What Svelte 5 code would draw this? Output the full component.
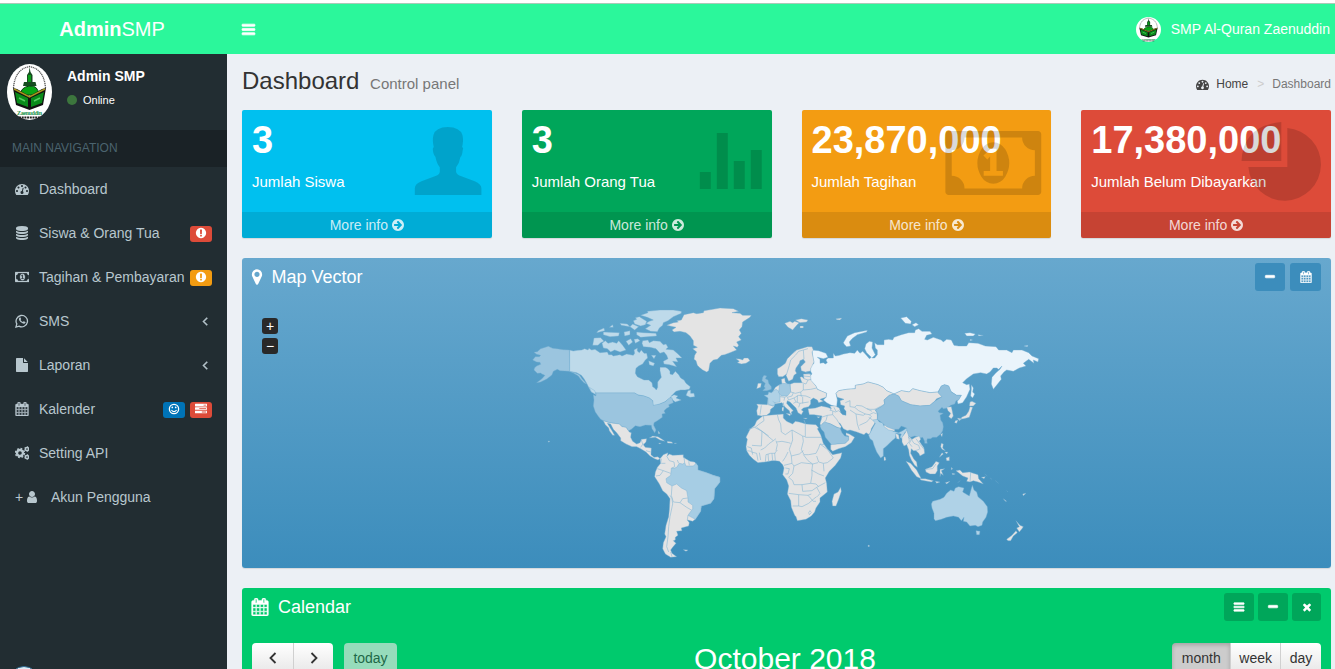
<script>
  const icons = {
    bars: 'M1664 1344v128q0 26-19 45t-45 19h-1408q-26 0-45-19t-19-45v-128q0-26 19-45t45-19h1408q26 0 45 19t19 45zm0-512v128q0 26-19 45t-45 19h-1408q-26 0-45-19t-19-45v-128q0-26 19-45t45-19h1408q26 0 45 19t19 45zm0-512v128q0 26-19 45t-45 19h-1408q-26 0-45-19t-19-45v-128q0-26 19-45t45-19h1408q26 0 45 19t19 45z',
    dash: 'M384 1152q0-53-37.5-90.5t-90.5-37.5-90.5 37.5-37.5 90.5 37.5 90.5 90.5 37.5 90.5-37.5 37.5-90.5zm192-448q0-53-37.5-90.5t-90.5-37.5-90.5 37.5-37.5 90.5 37.5 90.5 90.5 37.5 90.5-37.5 37.5-90.5zm428 481l101-382q6-26-7.5-48.5t-38.5-29.5-48 6.5-30 39.5l-101 382q-60 5-107 43.5t-63 98.5q-20 77 20 146t117 89 146-20 89-117q16-60-6-117t-72-91zm660-33q0-53-37.5-90.5t-90.5-37.5-90.5 37.5-37.5 90.5 37.5 90.5 90.5 37.5 90.5-37.5 37.5-90.5zm-640-640q0-53-37.5-90.5t-90.5-37.5-90.5 37.5-37.5 90.5 37.5 90.5 90.5 37.5 90.5-37.5 37.5-90.5zm448 192q0-53-37.5-90.5t-90.5-37.5-90.5 37.5-37.5 90.5 37.5 90.5 90.5 37.5 90.5-37.5 37.5-90.5zm320 448q0 261-141 483-19 29-54 29h-1402q-35 0-54-29-141-221-141-483 0-182 71-348t191-286 286-191 348-71 348 71 286 191 191 286 71 348z',
    database: 'M896 768q237 0 443-43t325-127v170q0 69-103 128t-280 93.5-385 34.5-385-34.5-280-93.5-103-128v-170q119 84 325 127t443 43zm0 768q237 0 443-43t325-127v170q0 69-103 128t-280 93.5-385 34.5-385-34.5-280-93.5-103-128v-170q119 84 325 127t443 43zm0-384q237 0 443-43t325-127v170q0 69-103 128t-280 93.5-385 34.5-385-34.5-280-93.5-103-128v-170q119 84 325 127t443 43zm0-1152q208 0 385 34.5t280 93.5 103 128v128q0 69-103 128t-280 93.5-385 34.5-385-34.5-280-93.5-103-128v-128q0-69 103-128t280-93.5 385-34.5z',
    money: 'M768 1152h384v-96h-128v-448h-114l-148 137 77 80q42-37 55-57h2v288h-128v96zm512-256q0 70-21 142t-59.5 134-101.5 101-138 39-138-39-101.5-101-59.5-134-21-142 21-142 59.5-134 101.5-101 138-39 138 39 101.5 101 59.5 134 21 142zm512 256v-512q-106 0-181-75t-75-181h-1152q0 106-75 181t-181 75v512q106 0 181 75t75 181h1152q0-106 75-181t181-75zm128-832v1152q0 26-19 45t-45 19h-1792q-26 0-45-19t-19-45v-1152q0-26 19-45t45-19h1792q26 0 45 19t19 45z',
    file: 'M1152 512v-472q22 14 36 28l408 408q14 14 28 36h-472zm-128 32q0 40 28 68t68 28h544v1056q0 40-28 68t-68 28h-1344q-40 0-68-28t-28-68v-1600q0-40 28-68t68-28h800v544z',
    calendar: 'M192 1664h288v-288h-288v288zm352 0h320v-288h-320v288zm-352-352h288v-320h-288v320zm352 0h320v-320h-320v320zm-352-384h288v-288h-288v288zm736 736h320v-288h-320v288zm-384-736h320v-288h-320v288zm768 736h288v-288h-288v288zm-384-352h320v-320h-320v320zm-352-864v-288q0-13-9.5-22.5t-22.5-9.5h-64q-13 0-22.5 9.5t-9.5 22.5v288q0 13 9.5 22.5t22.5 9.5h64q13 0 22.5-9.5t9.5-22.5zm736 864h288v-320h-288v320zm-384-384h320v-288h-320v288zm384 0h288v-288h-288v288zm32-480v-288q0-13-9.5-22.5t-22.5-9.5h-64q-13 0-22.5 9.5t-9.5 22.5v288q0 13 9.5 22.5t22.5 9.5h64q13 0 22.5-9.5t9.5-22.5zm384-64v1280q0 52-38 90t-90 38h-1408q-52 0-90-38t-38-90v-1280q0-52 38-90t90-38h128v-96q0-66 47-113t113-47h64q66 0 113 47t47 113v96h384v-96q0-66 47-113t113-47h64q66 0 113 47t47 113v96h128q52 0 90 38t38 90z',
    alert: 'M896 128q209 0 385.5 103t279.5 279.5 103 385.5-103 385.5-279.5 279.5-385.5 103-385.5-103-279.5-279.5-103-385.5 103-385.5 279.5-279.5 385.5-103zm128 1247v-190q0-14-9-23.5t-22-9.5h-192q-13 0-23 10t-10 23v190q0 13 10 23t23 10h192q13 0 22-9.5t9-23.5zm-2-344l18-621q0-12-10-18-10-8-24-8h-220q-14 0-24 8-10 6-10 18l17 621q0 10 10 17.5t24 7.5h185q14 0 23.5-7.5t10.5-17.5z',
    left: 'M1203 544q0 13-10 23l-393 393 393 393q10 10 10 23t-10 23l-50 50q-10 10-23 10t-23-10l-466-466q-10-10-10-23t10-23l466-466q10-10 23-10t23 10l50 50q10 10 10 23z',
    user: 'M1536 1399q0 109-62.5 187t-150.5 78h-854q-88 0-150.5-78t-62.5-187q0-85 8.5-160.5t31.5-152 58.5-131 94-89 134.5-34.5q131 128 313 128t313-128q76 0 134.5 34.5t94 89 58.5 131 31.5 152 8.5 160.5zm-256-887q0 159-112.5 271.5t-271.5 112.5-271.5-112.5-112.5-271.5 112.5-271.5 271.5-112.5 271.5 112.5 112.5 271.5z',
    arrow: 'M1413 896q0-27-18-45l-91-91-362-362q-18-18-45-18t-45 18l-91 91q-18 18-18 45t18 45l189 189h-502q-26 0-45 19t-19 45v128q0 26 19 45t45 19h502l-189 189q-18 18-18 45t18 45l91 91q18 18 45 18t45-18l362-362 91-91q18-18 18-45zm251 0q0 209-103 385.5t-279.5 279.5-385.5 103-385.5-103-279.5-279.5-103-385.5 103-385.5 279.5-279.5 385.5-103 385.5 103 279.5 279.5 103 385.5z',
    marker: 'M1152 640q0-106-75-181t-181-75-181 75-75 181 75 181 181 75 181-75 75-181zm256 0q0 109-33 179l-364 774q-16 33-47.5 52t-67.5 19-67.5-19-46.5-52l-365-774q-33-70-33-179 0-212 150-362t362-150 362 150 150 362z',
    minus: 'M1600 736v192q0 40-28 68t-68 28h-1216q-40 0-68-28t-28-68v-192q0-40 28-68t68-28h1216q40 0 68 28t28 68z',
    times: 'M1490 1322q0 40-28 68l-136 136q-28 28-68 28t-68-28l-294-294-294 294q-28 28-68 28t-68-28l-136-136q-28-28-28-68t28-68l294-294-294-294q-28-28-28-68t28-68l136-136q28-28 68-28t68 28l294 294 294-294q28-28 68-28t68 28l136 136q28 28 28 68t-28 68l-294 294 294 294q28 28 28 68z',
    tasks: 'M1024 1408h640v-128h-640v128zm-384-512h1024v-128h-1024v128zm640-512h384v-128h-384v128zm512 832v256q0 26-19 45t-45 19h-1664q-26 0-45-19t-19-45v-256q0-26 19-45t45-19h1664q26 0 45 19t19 45zm0-512v256q0 26-19 45t-45 19h-1664q-26 0-45-19t-19-45v-256q0-26 19-45t45-19h1664q26 0 45 19t19 45zm0-512v256q0 26-19 45t-45 19h-1664q-26 0-45-19t-19-45v-256q0-26 19-45t45-19h1664q26 0 45 19t19 45z'
  };

  // Extra outline weight for glyphs whose strokes are thin at small sizes.
  const weight = { bars: 90, calendar: 45, minus: 90, left: 70, money: 30 };

  const menu = [
    { icon: 'dash', label: 'Dashboard' },
    { icon: 'database', label: 'Siswa & Orang Tua', badges: [['alert', '#dd4b39']] },
    { icon: 'money', label: 'Tagihan & Pembayaran', badges: [['alert', '#f39c12']] },
    { icon: 'whatsapp', label: 'SMS', arrow: true },
    { icon: 'file', label: 'Laporan', arrow: true },
    { icon: 'calendar', label: 'Kalender', badges: [['smile', '#0073b7'], ['tasks', '#dd4b39']] },
    { icon: 'cogs', label: 'Setting API' },
    { icon: 'user', label: 'Akun Pengguna', plus: true }
  ];

  const cards = [
    { value: '3', label: 'Jumlah Siswa', tone: 'aqua' },
    { value: '3', label: 'Jumlah Orang Tua', tone: 'green' },
    { value: '23,870,000', label: 'Jumlah Tagihan', tone: 'yellow' },
    { value: '17,380,000', label: 'Jumlah Belum Dibayarkan', tone: 'red' }
  ];

  // Land outlines, grouped by map sheet; each sheet is drawn at three units per pixel.
  const plain = '#e4e4e4';
  const sheets = [
    { x: 520, y: 300, land: [
      ['#9bc5df', 'M148,150 L130,149 110,146 98,145 85,139 72,143 62,146 52,155 42,157 50,163 62,166 58,170 46,170 38,180 50,186 60,187 62,193 50,198 44,203 42,210 52,220 62,219 66,222 75,226 66,236 50,248 62,246 80,237 92,228 96,224 100,214 112,208 120,212 135,213 148,214 160,219 175,228 182,238 192,248 200,252 186,236 178,224 164,218 149,213Z'],
      ['#bedaea', 'M149,150 L160,153 172,151 185,150 194,146 204,150 207,145 215,150 225,148 240,158 262,156 266,164 275,164 280,168 300,164 306,168 320,162 340,166 344,160 342,150 352,144 352,153 358,158 364,150 372,160 380,160 383,174 376,180 368,192 356,198 348,205 346,220 352,230 372,240 386,240 396,248 398,260 404,264 409,270 413,262 413,246 424,232 420,212 420,202 436,202 444,206 450,214 450,222 458,224 466,214 476,224 482,234 492,240 498,250 511,260 508,268 495,270 482,270 468,274 462,280 452,290 462,284 474,288 468,294 484,300 466,306 458,300 452,292 445,298 434,306 420,312 404,318 398,314 398,302 388,294 372,288 352,284 344,279 230,279 214,276 206,262 200,250 192,236 184,226 170,218 149,214Z'],
      ['#9bc5df', 'M228,279 L344,279 356,286 372,288 388,294 398,302 400,316 420,312 436,305 448,294 456,293 460,308 446,314 448,320 438,326 432,333 436,340 426,342 427,352 412,362 402,368 401,376 408,390 404,398 396,386 394,376 376,375 360,380 346,377 334,388 326,392 318,382 306,380 298,372 268,368 250,362 242,358 236,350 226,336 220,318 222,300 220,284 228,288Z'],
      [plain, 'M440,76 L460,68 475,66 470,62 484,60 492,44 520,38 530,41 550,38 552,32 578,28 600,24 640,26 656,34 636,38 660,40 668,46 694,46 690,52 668,66 666,80 658,90 664,100 656,110 664,120 650,126 656,136 652,142 640,138 650,150 630,158 614,164 604,166 592,178 580,180 570,190 566,212 560,216 548,210 538,202 532,196 528,182 522,178 524,166 530,156 518,146 532,142 520,136 520,122 510,108 498,98 480,94 462,96 456,90 468,82 460,80Z'],
      [plain, 'M648,176 L660,177 668,180 672,174 684,174 690,182 678,190 664,192 652,188 658,184Z'],
      ['#bedaea', 'M362,46 L384,38 382,34 420,30 460,30 484,34 484,40 460,50 444,62 430,68 428,76 418,84 412,95 392,94 376,86 392,76 378,70 388,64 400,60 382,52Z M340,62 L350,58 346,53 358,50 380,64 376,74 362,78 344,72Z M366,130 L368,122 384,120 388,128 400,122 420,124 430,134 438,132 444,142 438,148 460,150 474,162 486,174 468,174 474,186 458,184 470,200 448,194 432,192 430,184 444,176 440,166 432,156 420,160 408,146 390,142 370,140Z M246,130 L256,122 264,130 278,126 290,130 296,122 308,136 318,150 300,156 284,150 272,156 262,146 250,144Z M222,114 L242,113 252,124 242,128 234,136 218,136Z M318,124 L332,116 338,126 326,136Z M342,118 L354,116 360,122 346,130Z M350,96 L370,98 408,100 410,108 362,112 350,104Z M250,96 L298,98 296,108 270,110 250,104Z M312,96 L330,92 330,104 314,108Z M230,98 L234,92 252,84 254,92Z M268,82 L278,74 280,82Z M300,70 L322,72 330,80 304,76Z M338,72 L356,80 344,90 330,80Z M388,194 L386,182 404,190 400,198Z M498,286 L504,272 512,270 512,280 522,280 524,290 510,292Z M394,166 L408,166 402,176Z M208,262 L224,272 228,284 214,276Z']
    ] },
    { x: 740, y: 300, land: [
      ['#eaf4fb', 'M216,150 L236,152 258,160 264,172 250,176 232,172 240,178 240,190 250,188 256,192 262,188 258,180 264,174 280,174 280,160 286,168 298,166 310,162 330,158 344,160 352,150 360,160 368,154 376,162 388,176 394,172 380,158 374,146 378,132 388,124 398,126 396,144 406,164 396,174 404,174 412,164 412,150 406,144 404,128 412,134 432,134 432,120 446,118 458,120 462,112 484,104 506,98 524,98 526,90 536,86 546,94 570,94 576,102 560,106 554,118 562,120 580,112 604,120 610,126 620,118 634,120 642,136 656,138 680,138 686,128 714,130 736,138 768,140 776,150 800,150 816,158 820,150 846,150 866,158 876,168 896,176 894,186 880,180 882,190 866,178 850,190 858,198 838,204 820,214 800,210 792,216 782,228 784,238 768,258 760,268 754,252 756,232 768,218 780,208 786,198 776,208 770,204 760,204 750,216 740,222 722,218 700,222 680,236 668,248 680,254 688,252 690,268 680,290 668,308 654,312 652,304 664,286 650,286 632,274 626,258 614,254 604,258 594,276 570,278 540,272 518,266 508,276 484,272 462,282 440,272 430,262 414,254 384,246 370,252 346,256 346,266 320,268 296,272 288,280 292,300 290,320 274,316 260,308 250,300 258,292 260,280 232,268 226,256 212,244 206,232 216,222 210,210 212,198 222,190 218,170Z M314,134 L310,128 322,108 344,98 382,91 380,96 352,104 336,116 328,126 332,138 320,140Z M482,54 L500,50 514,64 512,72 496,70Z M516,74 L528,68 536,74 524,80Z M674,100 L690,98 706,102 700,108 680,108Z M714,104 L730,106 716,108Z M694,254 L700,264 698,276 704,282 698,294 692,288 694,268Z M690,118 L698,120 690,122Z M852,138 L864,136 862,140Z'],
      [plain, 'M134,70 L150,64 158,68 164,64 178,68 170,76 158,90 152,86 144,82Z M166,60 L184,56 204,60 200,66 180,68Z M180,78 L190,78 190,84 180,84Z M288,56 L306,54 300,60 290,59Z M54,250 L64,250 62,262 50,266 52,258Z'],
      [plain, 'M112,222 L112,206 122,200 136,190 142,176 154,164 170,150 190,144 202,140 216,140 220,150 216,156 222,186 212,206 212,213 196,216 184,212 182,200 196,186 190,178 180,182 178,190 168,204 166,212 170,220 162,226 158,238 146,244 138,226 140,222 128,230 116,230Z'],
      [plain, 'M106,262 L118,254 126,252 124,238 134,234 136,246 144,254 152,252 162,248 186,248 182,238 180,232 186,230 192,236 190,222 212,222 212,240 228,258 232,268 260,280 258,292 240,298 250,304 236,308 232,300 220,294 212,300 212,312 206,320 190,324 184,330 190,334 184,344 174,338 168,324 150,306 142,302 140,310 150,322 160,332 154,336 156,344 150,340 148,332 134,320 126,308 116,310 104,312 102,320 92,328 90,338 80,346 66,348 52,346 50,332 54,320 50,312 82,314 84,294 96,280Z M206,336 L204,326 226,324 244,318 262,322 274,326 270,318 286,318 298,324 302,338 308,344 318,346 318,334 312,326 314,318 302,314 300,302 312,298 292,292 288,280 296,272 320,268 346,266 346,256 370,252 384,246 414,254 430,262 440,272 462,282 448,286 432,300 434,312 424,320 406,330 412,340 412,358 404,370 394,386 392,396 388,404 378,398 372,404 350,396 330,390 322,392 310,386 300,370 296,368 304,380 300,386 288,380 272,372 258,368 246,374 242,378 240,370 244,358 246,348 232,346 222,344 208,344Z'],
      ['#9bc5df', 'M240,378 L254,366 272,372 290,382 300,384 306,398 314,408 326,410 326,420 316,430 292,432 276,436 266,424 256,412 252,396 244,388Z'],
      [plain, 'M272,434 L292,432 316,430 326,420 326,408 318,406 318,398 328,402 344,412 334,428 316,440 296,446 278,454 272,448Z'],
      ['#b2d3e7', 'M398,360 L412,358 418,366 428,368 432,378 452,388 460,394 476,398 488,392 500,384 502,392 494,398 486,416 480,412 484,402 468,400 466,414 456,422 440,438 430,446 430,468 422,474 410,456 402,436 398,422 390,416 386,406 392,396 398,384 406,370Z'],
      [plain, 'M434,372 L464,386 464,394 446,390 432,380Z M466,400 L476,404 478,418 470,416Z M462,282 L484,272 508,276 518,266 540,272 570,278 594,276 606,290 590,296 584,304 570,316 540,318 512,314 484,302 476,288Z'],
      ['#93c0dc', 'M462,282 L476,288 484,302 512,314 540,318 570,316 584,304 606,290 594,278 604,258 614,254 626,258 634,276 650,286 664,286 656,300 648,302 644,312 632,316 622,324 610,326 606,322 594,334 598,338 610,340 600,346 602,360 608,368 610,380 608,392 602,402 590,412 578,412 572,416 562,416 560,424 554,424 548,412 540,414 532,410 524,408 512,412 502,404 500,384 484,378 476,388 460,388 440,380 428,370 412,358 414,342 406,330 424,320 434,312 432,300 448,286Z'],
      ['#93c0dc', 'M68,232 L72,226 80,228 76,236 84,240 86,250 94,260 94,268 80,272 68,272 76,264 72,260 76,250 66,242Z M554,424 L560,422 562,430 554,430Z'],
      ['#afd2e6', 'M72,286 L84,284 86,276 94,278 108,268 120,276 120,306 104,308 104,314 98,318 84,312 84,294Z'],
      ['#a1c9e1', 'M118,256 L128,250 150,252 152,276 142,288 124,288 116,278Z'],
      [plain, 'M620,322 L634,320 640,348 634,356 626,350 632,340 624,332Z M690,306 L696,304 708,310 700,318 688,318Z M690,320 L698,322 688,352 672,356 658,358 668,350 678,346 686,334Z M646,362 L654,360 650,370 644,368Z M652,354 L666,356 658,362Z M130,308 L132,320 128,316Z M126,322 L132,322 130,334 126,332Z M138,340 L152,342 150,348Z M190,354 L202,354 198,357Z M230,350 L240,350 236,354Z M602,404 L608,398 606,410Z']
    ], lines: 'M150,252 L152,276 166,280 182,276 190,270 190,252 M190,270 212,268 230,264 M160,278 156,288 142,292 146,300 162,294 176,286 198,288 212,294 M162,294 168,306 180,310 206,306 M180,310 176,322 M168,306 160,310 M182,276 184,290 M172,286 172,306 M188,290 188,310 M120,290 134,292 142,288 M134,292 132,302 M64,316 60,344 M84,314 102,318 M140,222 148,196 152,180 166,166 176,154 190,150 M190,150 192,178 M190,150 204,146 M212,222 196,218 M192,236 204,240 214,238 M190,228 210,230 M186,248 198,252 204,240 M150,168 166,152 M316,308 L330,302 330,320 344,322 350,316 366,318 380,326 390,328 404,328 432,314 M344,322 356,332 376,342 370,346 348,342 330,330 M348,342 352,372 358,390 M376,342 388,344 400,338 412,342 M388,344 394,350 380,366 358,376 M302,338 296,332 286,336 270,330 M278,334 278,344 290,358 296,368 M278,344 262,346 244,352 M262,346 258,362 246,372 M386,352 398,360 M380,326 396,334 M282,322 288,334 M404,328 412,336 M274,326 270,332 M98,304 108,310' },
    { x: 520, y: 420, land: [
      [plain, 'M250,2 L268,8 298,12 306,20 318,22 328,36 334,38 332,52 338,64 350,72 360,68 364,58 380,56 378,66 370,74 376,82 394,84 393,104 402,112 414,110 420,116 414,120 404,116 390,108 378,96 362,86 350,80 336,80 318,72 302,62 302,54 290,38 280,28 272,12 262,10 276,32 284,46 278,46 268,32 266,24 256,14Z'],
      [plain, 'M388,54 L398,48 414,50 430,60 434,64 420,60 406,52Z M442,64 L456,66 458,70 442,69Z M416,69 L424,70 418,72Z M464,69 L470,70 464,71Z M490,389 L504,390 498,394Z M84,63 L90,64 86,67Z M414,32 L420,40 416,42Z'],
      [plain, 'M420,116 L430,104 444,98 442,108 448,102 458,106 490,104 490,112 500,118 510,124 524,126 534,138 534,150 560,158 580,166 600,172 600,186 584,206 582,236 572,250 544,258 542,274 526,298 518,304 502,300 508,308 506,318 484,324 486,332 470,334 474,346 466,352 466,360 460,362 468,370 458,382 452,390 456,400 470,410 452,412 436,402 428,386 430,368 438,350 434,342 438,316 446,290 448,270 450,236 440,222 428,212 418,192 404,170 406,156 412,142 422,130Z'],
      ['#a6cde4', 'M438,176 L452,166 454,144 464,144 470,142 478,130 488,132 494,128 498,138 520,138 528,130 534,138 534,150 560,158 580,166 600,172 600,186 584,206 582,236 572,250 544,258 542,274 526,298 504,286 518,266 518,256 504,246 504,234 500,212 484,204 470,192 456,198 440,188Z']
    ], lines: 'M422,130 L424,116 M412,146 430,152 452,160 M430,152 420,166 408,168 M456,144 464,140 462,126 448,122 440,108 M492,112 494,128 M506,124 508,136 M456,198 454,226 460,246 M450,226 456,236 458,252 450,290 446,320 444,350 440,380 446,396 M460,246 480,248 488,236 504,234 M480,248 500,262 514,270 M504,286 502,300 M362,82 370,70 M378,92 392,96 M368,72 364,60 M452,396 456,410 M424,130 436,130 M472,120 476,130' },
    { x: 740, y: 400, land: [
      [plain, 'M68,48 L84,46 104,44 130,42 130,54 140,64 158,72 166,64 178,66 198,72 228,74 236,84 232,86 242,104 250,130 262,146 278,164 306,158 302,174 286,196 268,214 256,234 260,250 262,276 240,294 240,306 228,324 224,336 214,348 198,358 172,362 168,350 164,346 154,322 152,302 142,282 146,258 140,240 128,224 132,204 128,194 118,184 106,182 96,182 76,186 54,188 40,178 28,166 20,152 18,140 22,118 18,112 30,88 44,76 50,62Z M302,262 L304,274 296,298 288,318 278,318 276,304 282,282 294,276Z'],
      [plain, 'M486,112 L496,98 500,90 506,108 516,118 526,112 538,108 542,118 538,124 552,144 554,160 540,168 536,160 528,152 520,152 514,146 512,160 522,178 530,186 532,202 524,196 514,180 508,166 506,150 500,134 492,138 486,126Z'],
      [plain, 'M498,184 L512,190 530,210 544,236 530,230 514,210 506,196Z M540,236 L556,236 580,242 574,246 542,240Z M556,208 L576,200 588,184 598,188 592,198 592,212 586,222 570,222 558,216Z M600,208 L614,206 604,212 610,226 602,220 600,230Z M648,212 L660,210 668,218 688,216 714,224 716,236 730,252 714,246 700,242 690,246 680,244 684,234 668,228Z M604,130 L610,132 608,144 616,152 606,148 602,140Z M614,156 L624,156 620,162Z M618,174 L628,170 628,182 620,182Z M606,158 L610,162 598,172Z M432,170 L436,172 438,180 432,182Z M586,244 L600,246 590,250Z M616,248 L630,244 620,252Z M634,202 L638,206 634,210Z M724,232 L736,230 732,236Z M734,222 L742,228 M750,234 L756,238 M766,242 L776,250 M790,296 L800,304 796,304Z M848,282 L858,280 850,287Z M800,272 L804,276 M384,435 L390,438 384,440Z M636,220 L646,222 638,224Z M660,242 L654,248Z'],
      ['#afd2e7', 'M574,312 L578,304 600,298 612,292 620,280 632,270 642,274 646,264 656,260 672,264 668,276 688,288 694,266 697,256 702,270 710,276 714,290 730,304 742,320 743,336 738,352 728,366 726,376 714,380 706,376 690,378 680,366 670,364 672,352 664,362 656,352 640,348 620,352 604,358 586,362 582,356 582,340 576,324Z M708,392 L720,394 718,404 710,404Z'],
      [plain, 'M828,362 L840,376 850,380 846,386 838,396 830,384 838,380Z M800,418 L816,406 828,392 832,398 820,408 812,422 804,422Z']
    ], lines: 'M70,46 L72,62 58,72 48,80 26,88 M44,82 66,94 64,138 36,136 M66,94 100,122 108,116 M100,122 86,132 74,144 62,150 M50,82 86,108 M112,44 116,60 122,72 124,96 136,104 156,90 188,108 196,110 M196,70 196,110 M196,112 246,112 M156,90 158,120 148,148 M108,152 112,134 108,122 M110,126 126,124 146,128 152,130 M188,108 190,124 184,148 192,164 206,164 228,160 M148,148 154,168 178,162 190,152 M106,182 104,160 112,150 M144,156 136,172 128,184 M154,168 156,190 132,196 M76,186 78,164 92,160 106,160 M58,158 62,180 M34,156 50,160 54,182 M22,140 34,144 38,164 M22,152 34,154 M228,160 236,144 240,132 252,134 M240,132 262,148 280,174 262,188 250,190 236,186 230,168 M250,190 252,214 M190,164 204,182 218,192 234,188 M156,190 162,198 158,220 146,232 158,242 162,254 186,254 212,250 216,226 216,208 218,192 M214,210 236,222 252,228 M186,254 188,274 216,272 230,262 256,248 M146,280 176,284 204,286 214,282 M176,284 176,318 186,320 206,310 222,296 230,290 M212,250 228,252 236,260 M230,262 240,280 232,290 M158,318 176,318 M204,286 220,304 228,304 M206,338 210,332 214,338 208,344Z M84,162 86,184 M96,160 98,182 M192,60 196,70 M162,198 184,188 218,192 M692,218 L690,246 M506,108 508,124 500,134 M514,118 522,130 536,136 540,148 M514,118 508,130 516,140 M526,152 538,148 M528,116 538,130 552,148 M558,208 578,206 588,192 M136,222 144,222 148,206 136,204 M504,112 514,118' }
  ];
</script>

{#snippet fa(name)}
  {#if name === 'whatsapp'}
    <svg class="fa" viewBox="0 0 14 14"><path d="M1 13l.8-3.1A5.7 5.7 0 1 1 4 12.1z" fill="none" stroke="currentColor" stroke-width="1.300" /><path d="M4.400 3.700q.8-.8 1.200 0l.5 1.200q.1.400-.6 1 .9 1.600 2.400 2.100l.7-.8q.3-.2 1.800.7.3.2-.1 1-.7 1.100-2.300.6Q5 8.500 4 6.100 3.600 4.700 4.400 3.700z" fill="currentColor" /></svg>
  {:else if name === 'smile'}
    <svg class="fa" viewBox="0 0 14 14"><circle cx="7" cy="7" r="5.400" fill="none" stroke="currentColor" stroke-width="1.500" /><circle cx="5" cy="5.200" r="1" fill="currentColor" /><circle cx="9" cy="5.200" r="1" fill="currentColor" /><path d="M4 8.200Q7 12 10 8.200" fill="none" stroke="currentColor" stroke-width="1.300" /></svg>
  {:else if name === 'cogs'}
    <svg class="fa wide" viewBox="0 0 15 14" fill="none" stroke="currentColor">
      <circle cx="5" cy="7" r="3" stroke-width="2.400" /><circle cx="5" cy="7" r="4.500" stroke-width="1.500" stroke-dasharray="1.767" />
      <circle cx="12" cy="3" r="1.600" stroke-width="1.500" /><circle cx="12" cy="3" r="2.400" stroke-width="1" stroke-dasharray="1.257" />
      <circle cx="12" cy="11" r="1.600" stroke-width="1.500" /><circle cx="12" cy="11" r="2.400" stroke-width="1" stroke-dasharray="1.257" />
    </svg>
  {:else}
    <svg class="fa" class:wide={name === 'money'} viewBox={name === 'money' ? '0 0 1920 1792' : '0 0 1792 1792'}><path d={icons[name]} fill="currentColor" stroke="currentColor" stroke-width={weight[name] ?? 0} /></svg>
  {/if}
{/snippet}

{#snippet emblem(cls)}
  <svg class={cls} viewBox="0 0 45 56" preserveAspectRatio="none">
    <ellipse cx="22.500" cy="28" rx="22.500" ry="28" fill="#fff" />
    <path d="M6.500 24Q8 5 22.500 2.500 37 5 38.500 24" fill="none" stroke="#555" stroke-width="1.300" stroke-dasharray="1.200 .7" />
    <path d="M22.500 3l1 5 2 3v7h3l1 4H16l1-4h3v-7l2-3z" fill="#174c21" />
    <path d="M21 11h3v7h-3z" fill="#0a9c19" />
    <path d="M13 31q1-8 9.500-9T32 31z" fill="#08a415" stroke="#083e12" stroke-width="1" />
    <path d="M6 24l4 1 12.500 7L35 25l4-1-3 17-13.500 5L9 41z" fill="#111" />
    <path d="M8 28l13 6v9l-11-4zM37 28l-13 6v9l11-4z" fill="#098b1a" />
    <path d="M7 25l15.500 8L38 25" fill="none" stroke="#a9961d" stroke-width="1.500" />
    <path d="M12 34l6 3M33 34l-6 3" stroke="#55ca62" stroke-width="1.500" />
    <text x="22.500" y="51" text-anchor="middle" font-size="6" font-weight="bold" font-family="Liberation Serif, serif" textLength="25" fill="#23924a">Zaenuddin</text>
    <path d="M12 53.500h21" stroke="#222" stroke-width="2" stroke-dasharray="2 .7" />
  </svg>
{/snippet}

<div class="app">
  <header>
    <div class="brand"><b>Admin</b>SMP</div>
    <div class="toggle">{@render fa('bars')}</div>
    <div class="account">{@render emblem('avatar')}<span>SMP Al-Quran Zaenuddin</span></div>
  </header>
  <div class="body">
    <aside>
      <div class="user">
        {@render emblem('logo')}
        <div><b>Admin SMP</b><p><i></i>Online</p></div>
      </div>
      <div class="nav-title">MAIN NAVIGATION</div>
      <nav>
        {#each menu as m}
          <a href="#top">
            {#if m.plus}<span class="plus">+</span>{/if}
            <span class="ico" class:after={m.plus}>{@render fa(m.icon)}</span>
            <span>{m.label}</span>
            <span class="right">
              {#each m.badges ?? [] as [icon, color]}
                <span class="badge" style="background:{color}">{@render fa(icon)}</span>
              {/each}
              {#if m.arrow}<span class="angle">{@render fa('left')}</span>{/if}
            </span>
          </a>
        {/each}
      </nav>
      <div class="orb"></div>
    </aside>
    <main>
      <div class="head">
        <h1>Dashboard <small>Control panel</small></h1>
        <div class="crumbs"><span class="home">{@render fa('dash')}Home</span><span class="sep">&gt;</span><span>Dashboard</span></div>
      </div>
      <div class="cards">
        {#each cards as c}
          <div class="card {c.tone}">
            <div class="inner"><h3>{c.value}</h3><p>{c.label}</p></div>
            <svg class="art" viewBox="0 0 250 128">
              {#if c.tone === 'aqua'}
                <path transform="scale(.3333) translate(-21 -150)" d="M540,405V385Q540,372 560,364L600,349Q614,344 615,335V322Q606,312 602,291Q595,284 594,268Q594,262 597,262Q592,240 596,225Q602,202 639,201Q676,202 683,225Q687,240 682,262Q687,262 684,270Q682,288 677,291Q674,310 664,322V336Q666,344 680,349L720,364Q740,373 740,385V405Z" />
              {:else if c.tone === 'green'}
                <path d="M178 62h11v17h-11zM195 23h11v56h-11zM212 51h11v28h-11zM229 40h11v39h-11z" />
              {:else if c.tone === 'yellow'}
                <path transform="translate(143.500 8.200) scale(.05)" d={icons.money} />
              {:else}
                <path d="M206.500 18A36.400 36.400 0 1 1 167.500 57H206.500ZM200.500 12V51H160.700Q162 16 200.500 12Z" />
              {/if}
            </svg>
            <div class="more">More info {@render fa('arrow')}</div>
          </div>
        {/each}
      </div>

      <section class="map">
        <div class="bar">
          <span class="title">{@render fa('marker')}Map Vector</span>
          <span class="tools"><button>{@render fa('minus')}</button><button>{@render fa('calendar')}</button></span>
        </div>
        <div class="canvas">
          <svg viewBox="242 296 1089 272">
            {#each sheets as s}
              <g transform="translate({s.x} {s.y}) scale(.33333)" stroke-linejoin="round">
                {#each s.land as [fill, d]}<path {d} {fill} stroke="#75aed1" stroke-width="1.200" />{/each}
                {#if s.lines}<path d={s.lines} fill="none" stroke="#8dbbd6" stroke-width="1.900" />{/if}
              </g>
            {/each}
          </svg>
          <div class="zoom"><span>+</span><span>−</span></div>
        </div>
      </section>

      <section class="calendar">
        <div class="bar">
          <span class="title">{@render fa('calendar')}Calendar</span>
          <span class="tools"><button>{@render fa('bars')}</button><button>{@render fa('minus')}</button><button>{@render fa('times')}</button></span>
        </div>
        <div class="cal-row">
          <div class="group">
            <button class="step"><svg viewBox="0 0 10 14"><path d="M7.500 2L2.500 7l5 5" /></svg></button><button class="step"><svg viewBox="0 0 10 14"><path d="M2.500 2l5 5-5 5" /></svg></button>
            <button class="today">today</button>
          </div>
          <h2>October 2018</h2>
          <div class="group views"><button class="on">month</button><button>week</button><button>day</button></div>
        </div>
      </section>
    </main>
  </div>
</div>

<style>
  :global(body) { margin: 0; overflow: hidden; }
  * { box-sizing: border-box; }
  .app { width: 1335px; height: 669px; overflow: hidden; border-top: 3px solid #fff; background: #ecf0f5; font: 14px/20px "Liberation Sans", Arial, sans-serif; color: #333; display: flex; flex-direction: column; }
  h1, h2, h3, p { margin: 0; font-weight: 400; }
  .fa { width: 1em; height: 1em; display: inline-block; flex: none; }
  .fa.wide { width: 1.0714em; }
  header { height: 51px; flex: none; border-top: 1px solid #a9c9b8; background: #2bf79b; color: #fff; display: flex; align-items: center; }
  .brand { width: 227px; font-size: 20px; text-align: center; padding-right: 3px; }
  .toggle { display: flex; padding-left: 14px; }
  .toggle .fa { font-size: 15px; }
  .account { margin-left: auto; display: flex; align-items: center; gap: 10px; padding-right: 4px; }
  .account span { margin-right: 1px; }
  .app :global(.avatar) { width: 25px; height: 25px; }
  .app :global(.logo) { width: 45px; height: 56px; flex: none; }
  .body { flex: 1; display: flex; min-height: 0; }
  aside { width: 227px; flex: none; background: #222d32; color: #b8c7ce; position: relative; overflow: hidden; }
  .user { height: 76px; padding: 10px 7px; display: flex; gap: 15px; color: #fff; }
  .user b { display: block; line-height: 14px; margin-top: 5px; }
  .user p { font-size: 11px; line-height: 14px; margin-top: 10px; display: flex; align-items: center; gap: 6px; }
  .user i { width: 10px; height: 10px; border-radius: 50%; background: #3c763d; }
  .nav-title { height: 37px; background: #1a2226; color: #4b646f; font-size: 12px; line-height: 36px; padding-left: 12px; }
  nav { display: flex; flex-direction: column; }
  nav a { height: 44px; padding: 0 15px; display: flex; align-items: center; color: inherit; text-decoration: none; white-space: nowrap; }
  .ico { width: 24px; display: flex; }
  .ico .fa { margin-left: -.5px; }
  .ico.after { width: 26px; margin-left: 2px; }
  .plus { width: 8px; }
  .right { margin-left: auto; display: flex; gap: 5px; padding-top: 1px; }
  .badge { width: 22px; height: 16px; border-radius: 3px; color: #fff; display: flex; align-items: center; justify-content: center; font-size: 12px; }
  .badge .fa { margin-top: -1px; }
  .angle { display: flex; margin-top: -1px; }
  .orb { position: absolute; left: 9px; top: 612px; width: 30px; height: 30px; border-radius: 50%; background: #dcebf5; border: 1px solid #2d6a91; }
  main { flex: 1; min-width: 0; padding: 0 4px 0 15px; }
  .head { height: 56px; display: flex; align-items: center; justify-content: space-between; }
  h1 { font-size: 24px; line-height: 28px; padding-top: 1px; }
  h1 small { font-size: 15px; color: #777; margin-left: 4px; }
  .crumbs { display: flex; align-items: center; font-size: 12px; color: #777; padding-top: 4px; }
  .home { display: flex; align-items: center; gap: 7px; color: #444; }
  .home .fa { font-size: 13px; }
  .sep { color: #ccc; margin: 0 8px 0 9px; }
  .cards { display: grid; grid-template-columns: repeat(4, 1fr); gap: 30px; }
  .card { height: 128px; border-radius: 2px; position: relative; color: #fff; box-shadow: 0 1px 1px rgba(0,0,0,.1); display: flex; flex-direction: column; overflow: hidden; }
  .aqua { background: #00c0ef; } .green { background: #00a65a; } .yellow { background: #f39c12; } .red { background: #dd4b39; }
  .inner { height: 102px; padding: 9px 10px; }
  h3 { font-size: 38px; line-height: 42px; font-weight: 700; margin-bottom: 10px; }
  .inner p { font-size: 15px; line-height: 21px; }
  .art { position: absolute; inset: 0; width: 100%; height: 100%; fill: rgba(0,0,0,.15); }
  .more { height: 26px; background: rgba(0,0,0,.1); color: rgba(255,255,255,.8); display: flex; align-items: center; justify-content: center; gap: 3px; padding-left: 1px; }
  section { border-radius: 3px; color: #fff; box-shadow: 0 1px 1px rgba(0,0,0,.1); }
  .map { height: 310px; margin-top: 20px; background: linear-gradient(#67a8ce, #3c8dbc); }
  .bar { height: 38px; padding: 0 10px 0 9px; display: flex; align-items: center; justify-content: space-between; }
  .title { font-size: 18px; display: flex; align-items: center; }
  .map .title .fa { margin: 0 5.500px 0 -3px; }
  .calendar .title .fa { margin-right: 9px; }
  .tools { display: flex; gap: 5px; }
  .tools button { width: 30px; height: 28px; padding: 0; border: 0; border-radius: 3px; background: #3c8dbc; color: #fff; font-size: 12px; display: flex; align-items: center; justify-content: center; }
  .tools button:nth-child(2) { width: 31px; }
  .calendar .tools { gap: 4px; }
  .calendar .tools button { background: #00a65a; }
  .calendar .tools button:nth-child(2) { width: 30px; }
  .calendar .tools button:nth-child(3) { width: 29px; }
  .canvas { height: 272px; position: relative; }
  .canvas > svg { display: block; width: 1089px; height: 272px; }
  .zoom { position: absolute; left: 20px; top: 22px; display: grid; gap: 4px; }
  .zoom span { width: 16px; height: 16px; border-radius: 3px; background: #292929; font-size: 14px; line-height: 16px; text-align: center; }
  .calendar { margin-top: 20px; height: 310px; background: #00ca6d; }
  .cal-row { padding: 17px 10px 0; display: grid; grid-template-columns: 1fr auto 1fr; }
  h2 { font-size: 30px; line-height: 32px; padding-right: 3px; }
  .group { display: flex; }
  .group button { height: 32px; padding: 0 8px 2px; border: 0; border-left: 1px solid #d0d0d0; background: linear-gradient(#fff, #e6e6e6); font: 14px "Liberation Sans", Arial, sans-serif; color: #333; }
  .group button:first-child { border-radius: 4px 0 0 0; border-left: 0; }
  .group .step { width: 41px; padding: 0 0 4px; }
  .group .step:nth-child(2) { width: 40px; border-radius: 0 4px 0 0; }
  .step svg { width: 10px; height: 14px; fill: none; stroke: #333; stroke-width: 1.800; vertical-align: middle; }
  .group .today { width: 53px; margin-left: 11px; border: 0; border-radius: 4px 4px 0 0; opacity: .65; background: #e6e6e6; }
  .views { justify-content: flex-end; }
  .views button:last-child { width: 41px; border-radius: 0 4px 0 0; }
  .group .on { width: 58px; background: #ccc; box-shadow: inset 0 2px 4px rgba(0,0,0,.2); }
</style>
